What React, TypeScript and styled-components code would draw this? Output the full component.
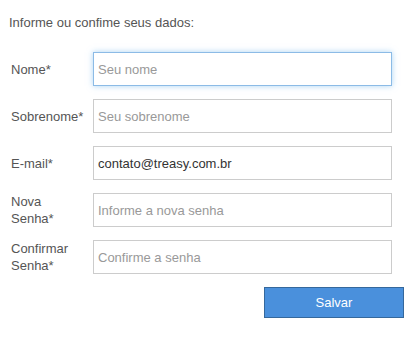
import React from "react";
import styled, { createGlobalStyle, css } from "styled-components";

const GlobalStyle = createGlobalStyle`
  body {
    margin: 0;
    background: #ffffff;
    font-family: Arial, "Liberation Sans", sans-serif;
  }
`;

type FieldType = {
  label: React.ReactNode;
  placeholder: string;
  value?: string;
  type?: string;
};

const fields: FieldType[] = [
  { label: "Nome*", placeholder: "Seu nome" },
  { label: "Sobrenome*", placeholder: "Seu sobrenome" },
  { label: "E-mail*", placeholder: "Seu e-mail", value: "contato@treasy.com.br" },
  {
    label: (
      <>
        Nova
        <br />
        Senha*
      </>
    ),
    placeholder: "Informe a nova senha",
    type: "password",
  },
  {
    label: (
      <>
        Confirmar
        <br />
        Senha*
      </>
    ),
    placeholder: "Confirme a senha",
    type: "password",
  },
];

const App = () => {
  return (
    <>
      <GlobalStyle />
      <Form onSubmit={(e) => e.preventDefault()}>
        <Intro>Informe ou confime seus dados:</Intro>
        <Fields>
          {fields.map((f, i) => (
            <Row key={i}>
              <Label>{f.label}</Label>
              <Input
                type={f.type || "text"}
                placeholder={f.placeholder}
                defaultValue={f.value}
                $active={i == 0}
                autoFocus={i == 0}
              />
            </Row>
          ))}
        </Fields>
        <Actions>
          <SaveButton type="submit">Salvar</SaveButton>
        </Actions>
      </Form>
    </>
  );
};

export default App;

const Form = styled.form`
  display: flex;
  flex-direction: column;
  width: 414px;
  padding: 15px 10px 0 9px;
  box-sizing: border-box;
`;

const Intro = styled.p`
  margin: 0;
  font-size: 13px;
  line-height: 15px;
  color: #555555;
`;

const Fields = styled.div`
  display: flex;
  flex-direction: column;
  gap: 13px;
  margin-top: 22px;
`;

const Row = styled.div`
  display: flex;
  align-items: center;
`;

const Label = styled.label`
  width: 84px;
  padding-left: 2px;
  box-sizing: border-box;
  font-size: 13px;
  line-height: 17px;
  color: #555555;
`;

const Input = styled.input<{ $active: boolean }>`
  width: 299px;
  height: 34px;
  box-sizing: border-box;
  padding: 0 4px;
  border: 1px solid #cccccc;
  border-radius: 0;
  font-family: Arial, "Liberation Sans", sans-serif;
  font-size: 13px;
  color: #333333;
  outline: none;
  &::placeholder {
    color: #999999;
  }
  ${(props) =>
    props.$active &&
    css`
      border-color: #8cbbe6;
      box-shadow: 0 0 6px rgba(102, 175, 233, 0.55);
    `}
`;

const Actions = styled.div`
  display: flex;
  justify-content: flex-end;
  margin-top: 13px;
`;

const SaveButton = styled.button`
  width: 140px;
  height: 31px;
  box-sizing: border-box;
  background-color: #4a90dc;
  border: 1px solid #35689c;
  border-radius: 0;
  color: #ffffff;
  font-family: Arial, "Liberation Sans", sans-serif;
  font-size: 13px;
  cursor: pointer;
`;
